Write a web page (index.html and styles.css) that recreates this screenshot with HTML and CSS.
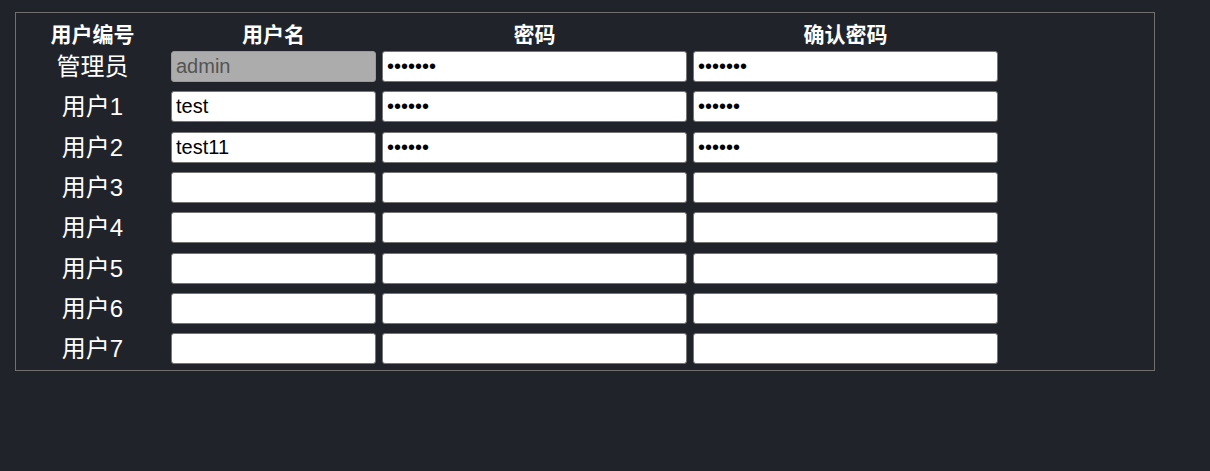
FILE: index.html
```html
<!DOCTYPE html>
<html lang="zh">
<head>
<meta charset="utf-8">
<title>用户管理</title>
<link rel="stylesheet" href="styles.css">
</head>
<body>
<div class="page">
  <div class="panel">
    <div class="grid">
      <div class="th">用户编号</div>
      <div class="th">用户名</div>
      <div class="th">密码</div>
      <div class="th">确认密码</div>

      <div class="label">管理员</div>
      <input class="field name" type="text" value="admin" disabled>
      <input class="field pwd" type="password" value="1234567">
      <input class="field pwd" type="password" value="1234567">

      <div class="label">用户1</div>
      <input class="field name" type="text" value="test">
      <input class="field pwd" type="password" value="123456">
      <input class="field pwd" type="password" value="123456">

      <div class="label">用户2</div>
      <input class="field name" type="text" value="test11">
      <input class="field pwd" type="password" value="123456">
      <input class="field pwd" type="password" value="123456">

      <div class="label">用户3</div>
      <input class="field name" type="text" value="">
      <input class="field pwd" type="password" value="">
      <input class="field pwd" type="password" value="">

      <div class="label">用户4</div>
      <input class="field name" type="text" value="">
      <input class="field pwd" type="password" value="">
      <input class="field pwd" type="password" value="">

      <div class="label">用户5</div>
      <input class="field name" type="text" value="">
      <input class="field pwd" type="password" value="">
      <input class="field pwd" type="password" value="">

      <div class="label">用户6</div>
      <input class="field name" type="text" value="">
      <input class="field pwd" type="password" value="">
      <input class="field pwd" type="password" value="">

      <div class="label">用户7</div>
      <input class="field name" type="text" value="">
      <input class="field pwd" type="password" value="">
      <input class="field pwd" type="password" value="">
    </div>
  </div>
</div>
</body>
</html>
```

FILE: styles.css
```css
html, body {
  margin: 0;
  padding: 0;
  background: #20232a;
  height: 100%;
}

.page {
  padding: 12px 0 0 15px;
  font-family: "Liberation Sans", "Noto Sans CJK SC", sans-serif;
  color: #ffffff;
}

.panel {
  box-sizing: border-box;
  width: 1140px;
  border: 1px solid #707070;
  padding: 9px 0 6px 4px;
}

.grid {
  display: grid;
  grid-template-columns: 145px 205px 305px 305px;
  grid-template-rows: 19.64px repeat(8, 31px);
  column-gap: 6px;
  row-gap: 9.357px;
}

.th {
  align-self: start;
  font-family: "Noto Sans CJK SC", sans-serif;
  font-weight: 700;
  font-size: 21px;
  line-height: 22px;
  text-align: center;
}

.label {
  font-family: "Liberation Sans", "Noto Sans CJK SC", sans-serif;
  font-size: 24px;
  line-height: 31px;
  text-align: center;
}

.field {
  box-sizing: border-box;
  width: 100%;
  height: 31px;
  margin: 0;
  border: 1px solid #767676;
  border-radius: 3px;
  padding: 1px 4px;
  background: #ffffff;
  color: #000000;
  font-family: "Liberation Sans", sans-serif;
  font-size: 20px;
  outline: none;
}

.field:disabled {
  background: #acacac;
  color: #545454;
  border-color: #9a9a9a;
}
```
